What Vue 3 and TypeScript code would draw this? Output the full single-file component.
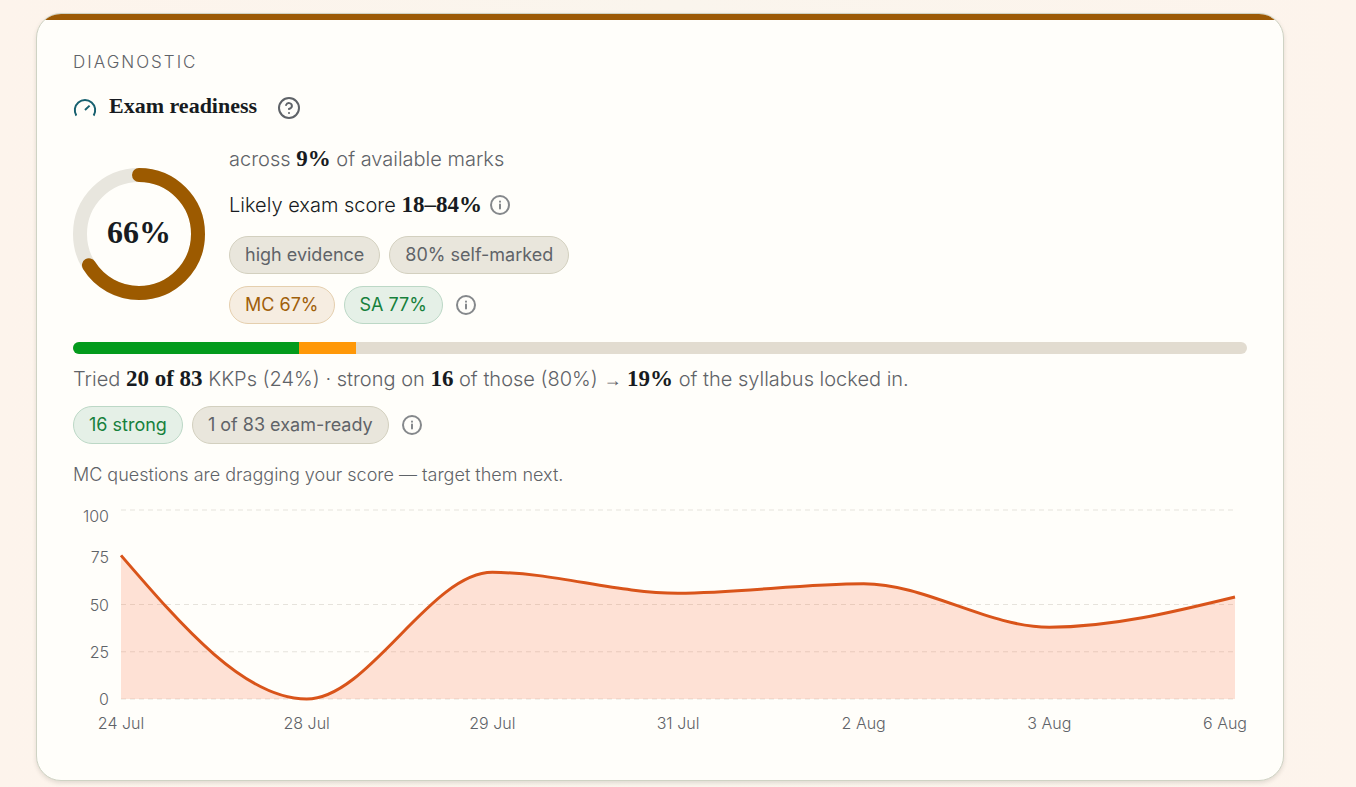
<script setup lang="ts">
import { computed, onBeforeUnmount, onMounted, ref } from 'vue'

interface Reading {
  label: string
  value: number
}

const readings: Reading[] = [
  { label: '24 Jul', value: 76 },
  { label: '28 Jul', value: 0 },
  { label: '29 Jul', value: 67 },
  { label: '31 Jul', value: 56 },
  { label: '2 Aug', value: 61 },
  { label: '3 Aug', value: 38 },
  { label: '6 Aug', value: 54 },
]

const readiness = 66
const ringLength = 2 * Math.PI * 59
const ringDash = `${(ringLength * readiness) / 100} ${ringLength}`

const strongShare = (16 / 83) * 100
const triedShare = (4 / 83) * 100

const chartBox = ref<HTMLElement | null>(null)
const chartWidth = ref(1174)
const chartHeight = 240
const plot = { left: 48, right: 12, top: 6, bottom: 195 }

const plotRight = computed(() => chartWidth.value - plot.right)
const yOf = (v: number) => plot.bottom - ((plot.bottom - plot.top) * v) / 100

const points = computed(() =>
  readings.map((r, i) => ({
    label: r.label,
    x: plot.left + ((plotRight.value - plot.left) * i) / (readings.length - 1),
    y: yOf(r.value),
  })),
)

// Monotone cubic interpolation: the curve never overshoots a reading.
const linePath = computed(() => {
  const p = points.value
  const n = p.length
  const slope = p.slice(1).map((q, i) => (q.y - p[i].y) / (q.x - p[i].x))
  const tan: number[] = new Array(n).fill(0)
  for (let i = 1; i < n - 1; i++) {
    const a = slope[i - 1]
    const b = slope[i]
    tan[i] = a * b <= 0 ? 0 : 2 * Math.sign(a) * Math.min(Math.abs(a), Math.abs(b), Math.abs(a + b) / 4)
  }
  tan[0] = (3 * slope[0] - tan[1]) / 2
  tan[n - 1] = (3 * slope[n - 2] - tan[n - 2]) / 2
  let d = `M${p[0].x},${p[0].y}`
  for (let i = 0; i < n - 1; i++) {
    const h = (p[i + 1].x - p[i].x) / 3
    d += `C${p[i].x + h},${p[i].y + h * tan[i]} ${p[i + 1].x - h},${p[i + 1].y - h * tan[i + 1]} ${p[i + 1].x},${p[i + 1].y}`
  }
  return d
})
const areaPath = computed(() => `${linePath.value}L${plotRight.value},${plot.bottom}L${plot.left},${plot.bottom}Z`)

const gridValues = [100, 50, 25, 0]
const yTicks = [100, 75, 50, 25, 0].map((v) => ({ v, y: Math.max(yOf(v), 12) + 6 }))

let observer: ResizeObserver | undefined
onMounted(() => {
  observer = new ResizeObserver(([entry]) => {
    chartWidth.value = entry.contentRect.width
  })
  if (chartBox.value) observer.observe(chartBox.value)
})
onBeforeUnmount(() => observer?.disconnect())
</script>

<template>
  <main class="page">
    <section class="card" aria-labelledby="readiness-title">
      <p class="eyebrow">DIAGNOSTIC</p>
      <header class="heading">
        <svg class="gauge" viewBox="0 0 24 24" aria-hidden="true">
          <path d="M3.34 19.6a10.2 10.2 0 1 1 17.32 0M12 14l4.6-4.4" />
        </svg>
        <h2 id="readiness-title">Exam readiness</h2>
        <button class="help" type="button" aria-label="About exam readiness">
          <svg viewBox="0 0 24 24" aria-hidden="true">
            <circle cx="12" cy="12" r="10" />
            <path d="M9.1 9a3 3 0 0 1 5.8 1c0 2-3 3-3 3M12 17h.01" />
          </svg>
        </button>
      </header>

      <div class="summary">
        <div class="ring">
          <svg viewBox="0 0 132 132" aria-hidden="true">
            <circle class="track" cx="66" cy="66" r="59" />
            <circle class="progress" cx="66" cy="66" r="59" :stroke-dasharray="ringDash" transform="rotate(-90 66 66)" />
          </svg>
          <strong>{{ readiness }}%</strong>
        </div>
        <div class="facts">
          <p class="lead">across <b>9%</b> of available marks</p>
          <p class="lead dark">
            <span>Likely exam score <b>18–84%</b></span>
            <button class="info" type="button" aria-label="About likely exam score">
              <svg viewBox="0 0 20 20" aria-hidden="true"><circle cx="10" cy="10" r="9" /><path d="M10 9.5v4M10 6.4v.4" /></svg>
            </button>
          </p>
          <div class="chips">
            <span class="chip">high evidence</span>
            <span class="chip">80% self-marked</span>
          </div>
          <div class="chips">
            <span class="chip amber">MC 67%</span>
            <span class="chip green">SA 77%</span>
            <button class="info" type="button" aria-label="About question types">
              <svg viewBox="0 0 20 20" aria-hidden="true"><circle cx="10" cy="10" r="9" /><path d="M10 9.5v4M10 6.4v.4" /></svg>
            </button>
          </div>
        </div>
      </div>

      <div class="bar" role="img" aria-label="Syllabus coverage">
        <span class="strong" :style="{ width: strongShare + '%' }"></span>
        <span class="tried" :style="{ width: triedShare + '%' }"></span>
      </div>
      <p class="lead coverage">
        Tried <b>20 of 83</b> KKPs (24%) · strong on <b>16</b> of those (80%) <span class="arrow">→</span> <b>19%</b> of the syllabus locked in.
      </p>
      <div class="chips">
        <span class="chip green">16 strong</span>
        <span class="chip">1 of 83 exam-ready</span>
        <button class="info" type="button" aria-label="About exam-ready points">
          <svg viewBox="0 0 20 20" aria-hidden="true"><circle cx="10" cy="10" r="9" /><path d="M10 9.5v4M10 6.4v.4" /></svg>
        </button>
      </div>
      <p class="advice">MC questions are dragging your score — target them next.</p>

      <div ref="chartBox" class="chart">
        <svg :width="chartWidth" :height="chartHeight" role="img" aria-label="Score over time">
          <line v-for="v in gridValues" :key="v" class="grid" :x1="plot.left" :x2="plotRight" :y1="yOf(v)" :y2="yOf(v)" />
          <path class="area" :d="areaPath" />
          <path class="curve" :d="linePath" />
          <text v-for="t in yTicks" :key="t.v" class="tick" x="36" :y="t.y" text-anchor="end">{{ t.v }}</text>
          <text
            v-for="(p, i) in points"
            :key="p.label"
            class="tick"
            :x="i === points.length - 1 ? chartWidth : p.x"
            y="225"
            :text-anchor="i === points.length - 1 ? 'end' : 'middle'"
          >{{ p.label }}</text>
        </svg>
      </div>
    </section>
  </main>
</template>

<style>
html {
  min-height: 100%;
  background: linear-gradient(90deg, #fdf4ec, #faf5ed 50%, #fdf4ec);
}
body {
  margin: 0;
}
</style>

<style scoped>
.page {
  padding: 13px 72px 6px 36px;
  font-family: Inter, "Liberation Sans", sans-serif;
  font-weight: 300;
  color: #5f6368;
}
.card {
  position: relative;
  overflow: hidden;
  padding: 36px;
  border: 1px solid #cfd3c4;
  border-radius: 25px;
  background: #fffefa;
  box-shadow: 0 2px 4px rgba(60, 60, 40, 0.14);
}
.card::before {
  content: "";
  position: absolute;
  inset: 0 0 auto;
  height: 6px;
  background: #9c5a06;
}
p,
h2 {
  margin: 0;
}
.eyebrow {
  font-size: 17px;
  line-height: 24px;
  letter-spacing: 2px;
}
.heading {
  display: flex;
  align-items: center;
  margin-top: 20px;
  height: 28px;
}
.gauge {
  width: 24px;
  height: 24px;
  margin-right: 12px;
  fill: none;
  stroke: #17606f;
  stroke-width: 2;
}
h2,
b,
strong {
  font-family: "Liberation Serif", serif;
  font-weight: 700;
  color: #171b21;
}
h2 {
  font-size: 22px;
  line-height: 28px;
  padding-bottom: 4px;
}
button {
  display: inline-flex;
  padding: 0;
  border: 0;
  background: none;
  color: inherit;
  cursor: pointer;
}
button svg {
  fill: none;
  stroke: currentColor;
  stroke-linecap: round;
}
.help {
  margin-left: 20px;
}
.help svg {
  width: 24px;
  height: 24px;
  stroke-width: 2;
}
.info {
  color: #85888b;
}
.info svg {
  width: 20px;
  height: 20px;
  stroke-width: 2;
}
.summary {
  display: flex;
  align-items: center;
  gap: 24px;
  margin-top: 22px;
}
.ring {
  display: grid;
  place-items: center;
  width: 132px;
  height: 132px;
}
.ring > * {
  grid-area: 1 / 1;
}
.ring svg {
  width: 132px;
  height: 132px;
  fill: none;
  stroke-width: 14;
}
.track {
  stroke: #e8e6de;
}
.progress {
  stroke: #9c5a00;
  stroke-linecap: round;
}
.ring strong {
  font-size: 32px;
  line-height: 36px;
  padding-bottom: 4px;
}
.lead {
  font-size: 20px;
  line-height: 30px;
}
.lead b {
  font-size: 23px;
  line-height: 24px;
}
.arrow {
  font-family: "Liberation Sans", sans-serif;
  font-size: 18px;
  line-height: 24px;
}
.dark {
  display: flex;
  align-items: center;
  gap: 8px;
  margin: 16px 0;
  color: #171b21;
}
.chips {
  display: flex;
  align-items: center;
  gap: 9px;
}
.chips + .chips {
  margin-top: 12px;
}
.chips .info {
  margin-left: 4px;
}
.chip {
  box-sizing: border-box;
  height: 38px;
  padding: 0 15px;
  border: 1px solid #d3d0bf;
  border-radius: 19px;
  background: #e9e6dc;
  font-size: 18px;
  line-height: 36px;
  font-weight: 400;
}
.amber {
  border-color: #e5cfae;
  background: #f6ede1;
  color: #a05f0a;
}
.green {
  border-color: #bcd8c6;
  background: #e5f0e7;
  color: #16803c;
}
.bar {
  display: flex;
  height: 12px;
  margin-top: 18px;
  overflow: hidden;
  border-radius: 6px;
  background: #e2dcd0;
}
.strong {
  background: #039b1c;
}
.tried {
  background: #ff9808;
}
.coverage {
  margin: 10px 0 12px;
}
.advice {
  margin: 19px 0 17px;
  font-size: 18px;
  line-height: 24px;
}
.chart {
  height: 240px;
}
.chart svg {
  display: block;
}
.grid {
  stroke: #e6e3dc;
  stroke-dasharray: 5 4;
}
.area {
  fill: #f95f2e;
  fill-opacity: 0.18;
}
.curve {
  fill: none;
  stroke: #d9541a;
  stroke-width: 3;
}
.tick {
  fill: #5f6368;
  font-size: 16px;
}
</style>
